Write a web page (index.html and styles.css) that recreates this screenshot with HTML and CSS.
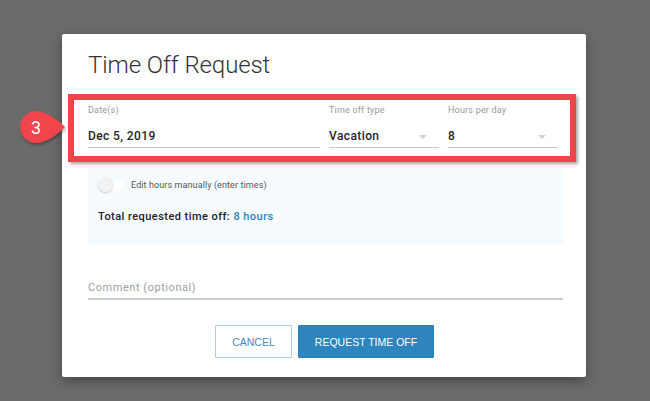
FILE: index.html
```html
<!DOCTYPE html>
<html>
<head>
<meta charset="utf-8">
<link rel="stylesheet" href="styles.css">
</head>
<body>
<div class="modal">
  <h1 class="title">Time Off Request</h1>
  <div class="fields">
    <div class="field f-date">
      <div class="label">Date(s)</div>
      <div class="value">Dec 5, 2019</div>
    </div>
    <div class="field f-sel">
      <div class="label">Time off type</div>
      <div class="value">Vacation<span class="arrow"></span></div>
    </div>
    <div class="field f-sel">
      <div class="label">Hours per day</div>
      <div class="value">8<span class="arrow"></span></div>
    </div>
  </div>
  <div class="panel">
    <div class="toggle-row">
      <span class="toggle"><span class="knob"></span></span>
      <span class="toggle-text">Edit hours manually (enter times)</span>
    </div>
    <div class="total">Total requested time off: <span class="hours">8 hours</span></div>
  </div>
  <div class="comment">Comment (optional)</div>
  <div class="actions">
    <button class="btn btn-cancel">CANCEL</button>
    <button class="btn btn-primary">REQUEST TIME OFF</button>
  </div>
</div>
<div class="highlight"></div>
<svg class="callout" width="80" height="60" viewBox="0 0 80 60">
  <defs>
    <filter id="sh" x="-20%" y="-20%" width="150%" height="150%">
      <feDropShadow dx="1" dy="2" stdDeviation="1.5" flood-color="#000" flood-opacity="0.35"/>
    </filter>
  </defs>
  <path d="M65 27 Q53 15 43 12.5 A16 16 0 1 0 43 41.5 Q53 39 65 27 Z" fill="#f1454b" filter="url(#sh)"/>
  <text x="36" y="34" text-anchor="middle" class="callout-num">3</text>
</svg>
</body>
</html>
```
FILE: styles.css
```css
html, body {
  margin: 0;
  padding: 0;
}
body {
  background: #6b6b6b;
  width: 650px;
  height: 401px;
  overflow: hidden;
  position: relative;
  font-family: Roboto, "Liberation Sans", sans-serif;
}
.modal {
  margin: 34px 0 0 62px;
  width: 524px;
  height: 343px;
  box-sizing: border-box;
  background: #fff;
  padding: 15px 23px 0 26px;
  box-shadow: 0 4px 12px rgba(0,0,0,0.35);
  border-radius: 2px;
}
.title {
  margin: 0;
  font-size: 24px;
  font-weight: 300;
  line-height: 32px;
  color: #333;
  letter-spacing: -0.1px;
}
.fields {
  display: flex;
  gap: 9px;
  margin-top: 23px;
}
.f-date { width: 232px; }
.f-sel { width: 110px; }
.label {
  font-size: 9px;
  line-height: 12px;
  color: #9a9a9a;
  letter-spacing: 0.2px;
}
.value {
  margin-top: 11px;
  font-size: 12px;
  line-height: 19px;
  font-weight: 500;
  color: #262626;
  padding-bottom: 1px;
  border-bottom: 1px solid #c9c9c9;
  display: flex;
  align-items: center;
  justify-content: space-between;
  letter-spacing: 0.4px;
}
.arrow {
  width: 0;
  height: 0;
  border-left: 4px solid transparent;
  border-right: 4px solid transparent;
  border-top: 4px solid #d2d2d2;
  margin-right: 12px;
}
.panel {
  margin-top: 20px;
  background: #f5fbfe;
  padding: 9px 10px 20px 10px;
}
.toggle-row {
  display: flex;
  align-items: center;
  height: 16px;
}
.toggle {
  position: relative;
  width: 26px;
  height: 10px;
  background: #fff;
  border-radius: 5px;
  display: inline-block;
}
.knob {
  position: absolute;
  left: 0;
  top: -3px;
  width: 15px;
  height: 15px;
  border-radius: 50%;
  background: #f2f2f2;
  box-shadow: 0 1px 2px rgba(0,0,0,0.2);
}
.toggle-text {
  margin-left: 7px;
  font-size: 9px;
  color: #555;
  letter-spacing: 0.1px;
}
.total {
  margin-top: 17px;
  font-size: 11px;
  line-height: 14px;
  font-weight: 500;
  color: #222;
  letter-spacing: 0.45px;
}
.hours {
  color: #2e86c1;
}
.comment {
  margin-top: 37px;
  font-size: 11px;
  line-height: 14px;
  color: #a0a0a0;
  padding-bottom: 3px;
  border-bottom: 2px solid #cbcbcb;
  letter-spacing: 0.55px;
}
.actions {
  display: flex;
  justify-content: center;
  gap: 6px;
  margin-top: 25px;
  padding-right: 2px;
}
.btn {
  height: 33px;
  font-family: "Liberation Sans", Arial, sans-serif;
  font-size: 10.5px;
  border-radius: 1px;
  cursor: pointer;
  letter-spacing: 0;
}
.btn-cancel {
  width: 77px;
  background: #fff;
  border: 1px solid #a8cde5;
  color: #3d8ec4;
}
.btn-primary {
  width: 136px;
  background: #2e84bd;
  border: 1px solid #2a7fb8;
  color: #fff;
}
.highlight {
  position: absolute;
  left: 68px;
  top: 94px;
  width: 508px;
  height: 68px;
  box-sizing: border-box;
  border: 6px solid #f1444a;
  box-shadow: 2px 2px 3px rgba(0,0,0,0.35);
}
.callout {
  position: absolute;
  left: 0;
  top: 100px;
}
.callout-num {
  font-family: Roboto, "Liberation Sans", sans-serif;
  font-size: 18px;
  fill: #fff;
}
```
